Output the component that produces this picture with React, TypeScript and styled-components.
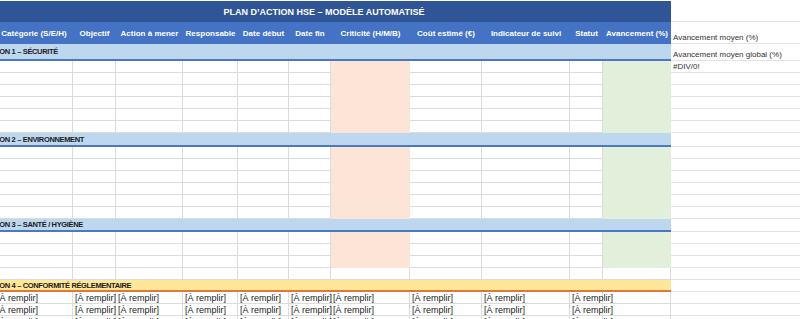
import styled, { createGlobalStyle } from "styled-components";

const COLS = "78px 43px 67px 55px 51px 42px 79px 72px 88px 33px 68px 1fr";

const GlobalStyle = createGlobalStyle`
  html, body {
    margin: 0;
    padding: 0;
    background: #fff;
  }
  body {
    font-family: "Liberation Sans", Arial, sans-serif;
  }
`;

const Viewport = styled.div`
  width: 800px;
  height: 319px;
  overflow: hidden;
  padding-top: 1px;
  box-sizing: border-box;
  background: #fff;
`;

// the sheet is scrolled a few pixels to the right, as in the capture
const Sheet = styled.div`
  margin-left: -5px;
  width: 805px;
  display: flex;
  flex-direction: column;
`;

const Row = styled.div<{ $h: number }>`
  display: grid;
  grid-template-columns: ${COLS};
  height: ${(p) => p.$h}px;
  flex-shrink: 0;
  background: #fff;
`;

const TitleCell = styled.div`
  grid-column: 1 / 12;
  background: #2f5597;
  color: #fff;
  font-weight: 700;
  font-size: 9px;
  display: flex;
  align-items: center;
  justify-content: center;
  padding-right: 18px;
  white-space: nowrap;
`;

const HeadCell = styled.div`
  background: #4472c4;
  color: #fff;
  font-weight: 700;
  font-size: 8px;
  display: flex;
  align-items: center;
  justify-content: center;
  white-space: nowrap;
`;

const SideCell = styled.div`
  border-bottom: 1px solid #e2e2e2;
  box-sizing: border-box;
  display: flex;
  align-items: flex-end;
  padding: 0 0 1px 2px;
  font-size: 8px;
  color: #333;
  white-space: nowrap;
`;

const bandColors = {
  blue: { fill: "#bdd7ee", line: "#4a78c2" },
  yellow: { fill: "#ffe699", line: "#e2773a" },
};

const BandCell = styled.div<{ $tone: keyof typeof bandColors }>`
  grid-column: 1 / 12;
  background: ${(p) => bandColors[p.$tone].fill};
  border-bottom: 2px solid ${(p) => bandColors[p.$tone].line};
  box-sizing: border-box;
  display: flex;
  align-items: center;
  overflow: hidden;
`;

const BandLabel = styled.span`
  margin-left: -16px;
  font-size: 7.5px;
  font-weight: 700;
  letter-spacing: -0.35px;
  color: #1b1b1b;
  white-space: nowrap;
`;

const fills = {
  none: "transparent",
  pink: "#fce4d6",
  green: "#e2efda",
};

const Cell = styled.div<{ $tone: keyof typeof fills }>`
  background: ${(p) => fills[p.$tone]};
  border-right: 1px solid ${(p) => (p.$tone === "none" ? "#dcdcdc" : fills[p.$tone])};
  border-bottom: 1px solid ${(p) => (p.$tone === "none" ? "#dcdcdc" : fills[p.$tone])};
  box-sizing: border-box;
  display: flex;
  align-items: center;
  padding-left: 2px;
  font-size: 9px;
  color: #222;
  white-space: nowrap;
  overflow: visible;
  min-width: 0;
`;

const headers = [
  "Catégorie (S/E/H)",
  "Objectif",
  "Action à mener",
  "Responsable",
  "Date début",
  "Date fin",
  "Criticité (H/M/B)",
  "Coût estimé (€)",
  "Indicateur de suivi",
  "Statut",
  "Avancement (%)",
];

type Section = {
  label: string;
  tone: keyof typeof bandColors;
  bandHeight: number;
  rows: number;
  tinted: number;
  filled?: boolean;
  side?: string;
};

const sections: Section[] = [
  { label: "SECTION 1 – SÉCURITÉ", tone: "blue", bandHeight: 17, rows: 6, tinted: 6, side: "Avancement moyen global (%)" },
  { label: "SECTION 2 – ENVIRONNEMENT", tone: "blue", bandHeight: 14, rows: 6, tinted: 6 },
  { label: "SECTION 3 – SANTÉ / HYGIÈNE", tone: "blue", bandHeight: 13, rows: 4, tinted: 3 },
  { label: "SECTION 4 – CONFORMITÉ RÉGLEMENTAIRE", tone: "yellow", bandHeight: 12, rows: 3, tinted: 0, filled: true },
];

const toneFor = (col: number, tinted: boolean): keyof typeof fills => {
  if (!tinted) return "none";
  if (col === 6) return "pink";
  if (col === 10) return "green";
  return "none";
};

const App = () => {
  return (
    <>
      <GlobalStyle />
      <Viewport>
        <Sheet>
          <Row $h={21}>
            <TitleCell>PLAN D’ACTION HSE – MODÈLE AUTOMATISÉ</TitleCell>
            <SideCell />
          </Row>
          <Row $h={22}>
            {headers.map((h) => (
              <HeadCell key={h}>{h}</HeadCell>
            ))}
            <SideCell>Avancement moyen (%)</SideCell>
          </Row>

          {sections.map((s, si) => (
            <div key={s.label}>
              <Row $h={s.bandHeight}>
                <BandCell $tone={s.tone}>
                  <BandLabel>{s.label}</BandLabel>
                </BandCell>
                <SideCell>{s.side}</SideCell>
              </Row>
              {Array.from({ length: s.rows }).map((_, ri) => (
                <Row $h={12} key={ri}>
                  {headers.map((h, ci) => (
                    <Cell key={h} $tone={toneFor(ci, ri < s.tinted)}>
                      {s.filled && ci < 10 ? "[À remplir]" : ""}
                    </Cell>
                  ))}
                  <SideCell>{si === 0 && ri === 0 ? "#DIV/0!" : ""}</SideCell>
                </Row>
              ))}
            </div>
          ))}
        </Sheet>
      </Viewport>
    </>
  );
};

export default App;
